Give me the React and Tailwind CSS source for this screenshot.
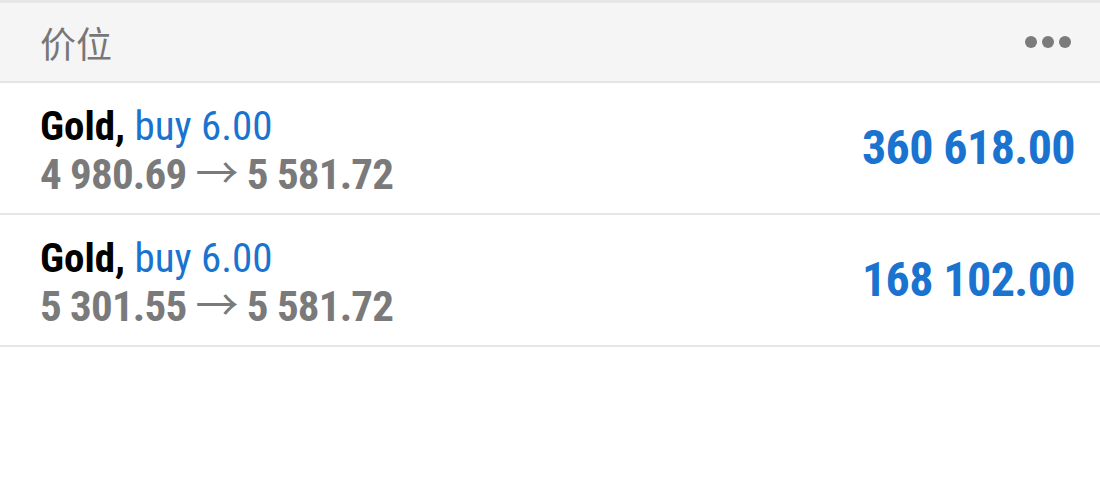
const positions = [
  { symbol: 'Gold', side: 'buy 6.00', open: '4 980.69', current: '5 581.72', profit: '360 618.00' },
  { symbol: 'Gold', side: 'buy 6.00', open: '5 301.55', current: '5 581.72', profit: '168 102.00' },
]

function MoreDots() {
  return (
    <div className="flex items-center gap-[5px]">
      <span className="block w-[12px] h-[12px] rounded-full bg-[#7b7b7b]" />
      <span className="block w-[12px] h-[12px] rounded-full bg-[#7b7b7b]" />
      <span className="block w-[12px] h-[12px] rounded-full bg-[#7b7b7b]" />
    </div>
  )
}

function PositionRow({ p }) {
  return (
    <div className="flex items-center justify-between h-[132px] pl-[40px] pr-[25px] border-b-2 border-[#e6e6e6]">
      <div className="flex flex-col pt-[3px]">
        <div className="leading-[48px] text-[41px] whitespace-nowrap">
          <span className="font-bold text-black">{p.symbol},</span>{' '}
          <span className="text-[#1a73cf]">{p.side}</span>
        </div>
        <div className="leading-[48px] text-[43px] font-bold text-[#7a7a7a] tracking-[-0.8px] whitespace-nowrap">
          {p.open} <span className="font-normal">→</span> {p.current}
        </div>
      </div>
      <div className="text-[48px] font-bold text-[#1a73cf] tracking-[-0.6px] leading-none whitespace-nowrap">{p.profit}</div>
    </div>
  )
}

export default function App() {
  return (
    <div className="w-[1100px] h-[481px] bg-white font-['Roboto_Condensed','Roboto','Noto_Sans_CJK_SC',sans-serif] font-stretch-condensed border-t-[3px] border-[#e6e6e6]">
      <div className="flex items-center justify-between h-[80px] bg-[#f5f5f5] pl-[40px] pr-[29px] border-b-2 border-[#e4e4e4]">
        <span className="text-[36px] text-[#777777] font-['Noto_Sans_CJK_SC',sans-serif] leading-none">价位</span>
        <MoreDots />
      </div>
      {positions.map((p, i) => (
        <PositionRow key={i} p={p} />
      ))}
    </div>
  )
}
